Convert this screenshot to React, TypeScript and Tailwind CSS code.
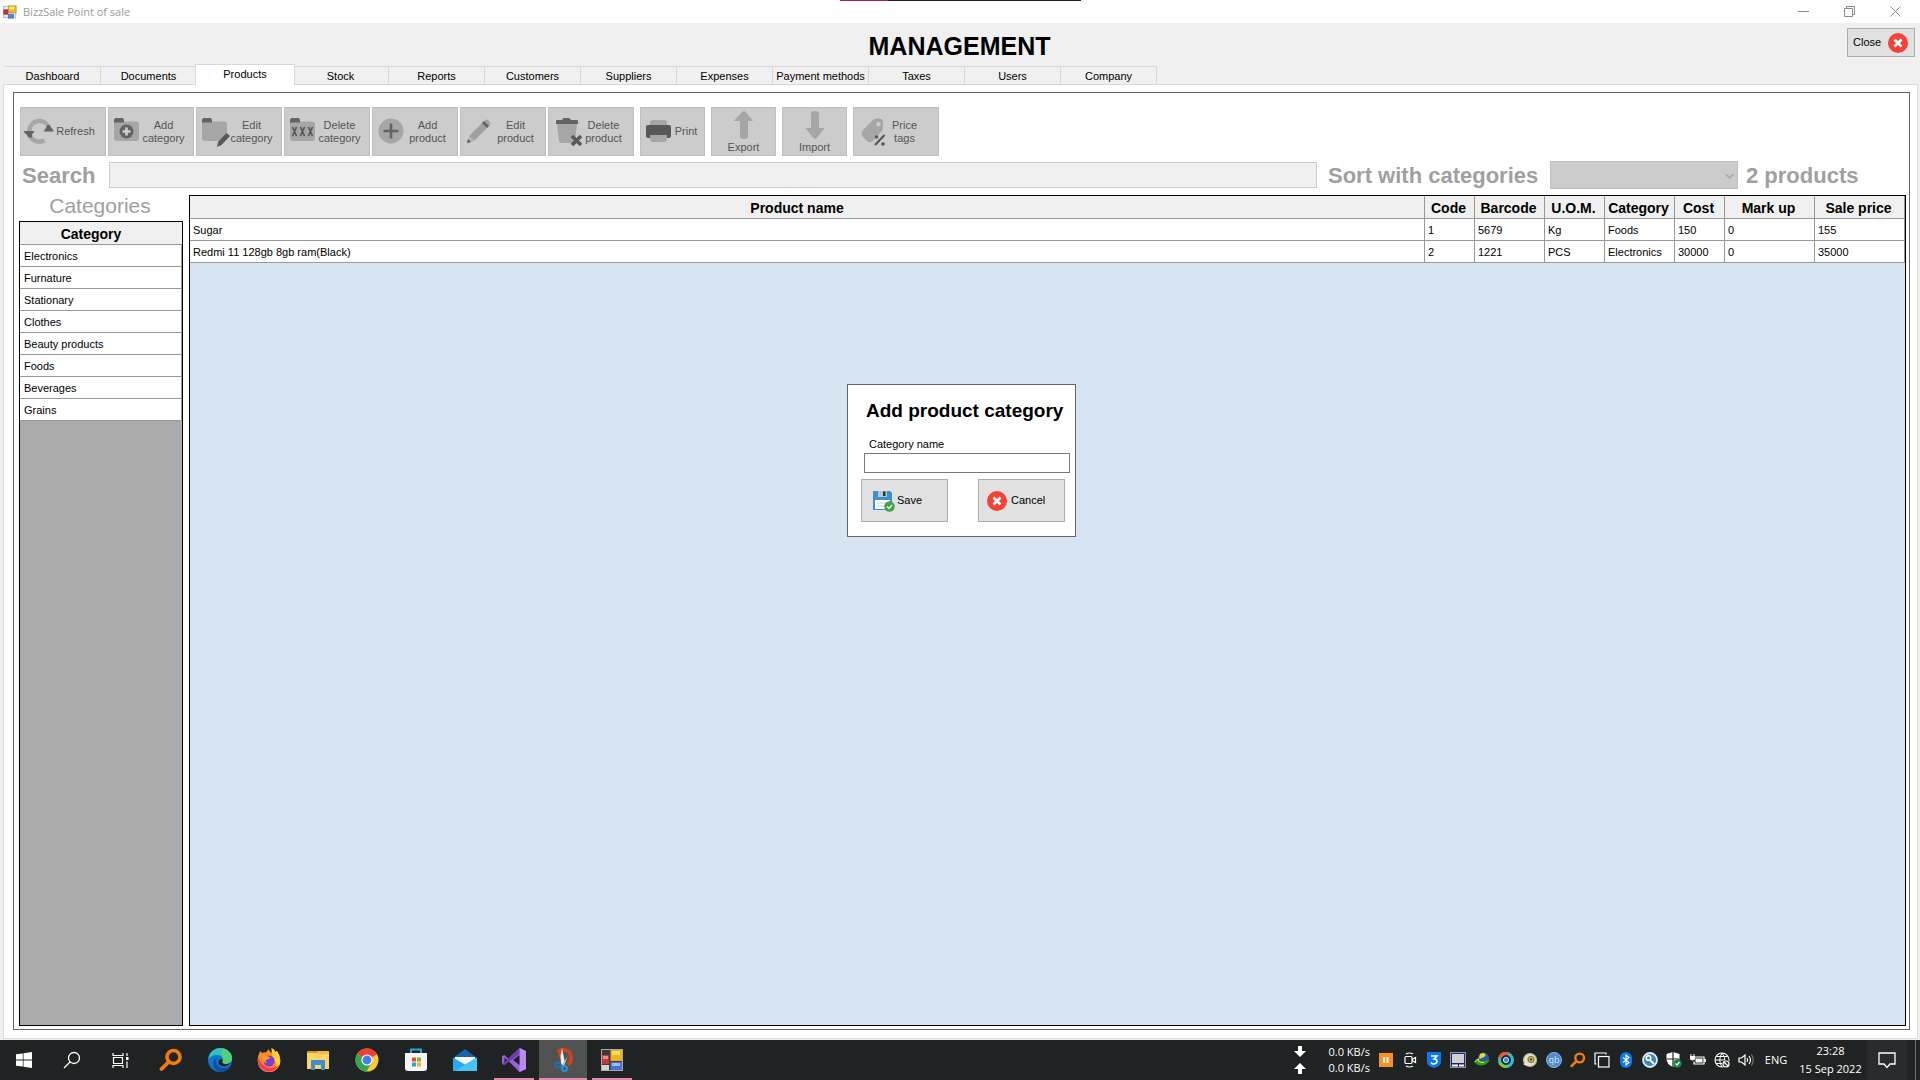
import { useState } from 'react'
import type { ReactNode } from 'react'

interface Product {
  name: string
  code: string
  barcode: string
  uom: string
  category: string
  cost: string
  markUp: string
  salePrice: string
}

const tabs = [
  'Dashboard',
  'Documents',
  'Products',
  'Stock',
  'Reports',
  'Customers',
  'Suppliers',
  'Expenses',
  'Payment methods',
  'Taxes',
  'Users',
  'Company',
]

const categories = [
  'Electronics',
  'Furnature',
  'Stationary',
  'Clothes',
  'Beauty products',
  'Foods',
  'Beverages',
  'Grains',
]

const products: Product[] = [
  { name: 'Sugar', code: '1', barcode: '5679', uom: 'Kg', category: 'Foods', cost: '150', markUp: '0', salePrice: '155' },
  {
    name: 'Redmi 11 128gb 8gb ram(Black)',
    code: '2',
    barcode: '1221',
    uom: 'PCS',
    category: 'Electronics',
    cost: '30000',
    markUp: '0',
    salePrice: '35000',
  },
]

const columns: { key: keyof Product; label: string; width: string }[] = [
  { key: 'name', label: 'Product name', width: 'pr-5' },
  { key: 'code', label: 'Code', width: 'w-[50px] pr-0.5' },
  { key: 'barcode', label: 'Barcode', width: 'w-[70px] pr-0.5' },
  { key: 'uom', label: 'U.O.M.', width: 'w-[60px] pr-0.5' },
  { key: 'category', label: 'Category', width: 'w-[70px] pr-0.5' },
  { key: 'cost', label: 'Cost', width: 'w-[50px] pr-0.5' },
  { key: 'markUp', label: 'Mark up', width: 'w-[90px] pr-0.5' },
  { key: 'salePrice', label: 'Sale price', width: 'w-[90px] pr-0.5' },
]

/* ---------- Icons ---------- */

const AppIcon = ({ className }: { className: string }) => (
  <svg viewBox="0 0 16 16" className={className}>
    <rect x="0.5" y="1.5" width="14" height="13" fill="#e8eef4" stroke="#a9b4bd" />
    <rect x="6" y="1" width="9" height="8" fill="#f0b820" stroke="#a88a2c" strokeWidth="0.7" />
    <rect x="7" y="2" width="6" height="3" fill="#ffe27a" />
    <rect x="1" y="5.5" width="4.5" height="5" fill="#d03030" stroke="#8c1d1d" strokeWidth="0.7" />
    <rect x="6" y="10.5" width="6" height="4.5" fill="#4b8be6" stroke="#2f5fae" strokeWidth="0.7" />
  </svg>
)

const CancelIcon = ({ className }: { className: string }) => (
  <svg viewBox="0 0 20 20" className={className}>
    <circle cx="10" cy="10" r="10" fill="#f44336" />
    <path d="M6.500 6.500l7 7M13.500 6.500l-7 7" stroke="#fff" strokeWidth="2.6" />
  </svg>
)

const SaveIcon = () => (
  <svg viewBox="0 0 22 22" className="h-[22px] w-[22px]">
    <path d="M0 1h17l2 2v17H0z" fill="#3c8fd0" />
    <rect x="5" y="1" width="9" height="6" fill="#b8c4cc" />
    <rect x="10" y="1.5" width="2.5" height="4.5" fill="#263238" />
    <rect x="2" y="10" width="15" height="9" fill="#fff" />
    <path d="M4 13h11M4 16h9" stroke="#c3ccd2" strokeWidth="1" />
    <circle cx="16.5" cy="16.5" r="5.2" fill="#43a047" />
    <path d="M14 16.5l2 2 3.2-3.6" stroke="#e6f5e7" strokeWidth="1.5" fill="none" />
  </svg>
)

const FolderShape = () => (
  <>
    <path d="M2 6.500V4q0-3 3-3h4q3 0 3 3v2.500z" fill="#646464" />
    <rect x="2" y="4.500" width="25" height="19.500" rx="3" fill="#a6a6a6" />
    <path d="M2 5.500V4q0-3 3-3h4q3 0 3 3v1.500z" fill="#646464" />
  </>
)

const ToolIcon = ({ children }: { children: ReactNode }) => (
  <svg viewBox="0 0 30 30" className="h-[30px] w-[30px] shrink-0">
    {children}
  </svg>
)

const RefreshIcon = () => (
  <ToolIcon>
    <path d="M5.300 14A10.200 10.200 0 0 1 24.500 9.500" stroke="#a6a6a6" strokeWidth="4.600" fill="none" />
    <path d="M5.500 17A10.200 10.200 0 0 0 20.500 23.300" stroke="#a6a6a6" strokeWidth="4.600" fill="none" />
    <path d="M0 14h10q.5 1-2 3.500v3H4.500l-2-3Q-.5 15 0 14z" fill="#646464" />
    <path d="M20 14.500h9.500q.5-1-2-3.500l-2-3h-2l-1.500 3q-2.500 2.500-2 3.500z" fill="#646464" />
  </ToolIcon>
)

const AddCategoryIcon = () => (
  <ToolIcon>
    <FolderShape />
    <circle cx="14.500" cy="14.500" r="7" fill="#646464" />
    <path d="M14.500 10.500v8M10.500 14.500h8" stroke="#cfcfcf" strokeWidth="2.600" />
  </ToolIcon>
)

const EditCategoryIcon = () => (
  <ToolIcon>
    <FolderShape />
    <path d="M17 30l1-5 8.500-9 3.500 3-8.500 9z" fill="#585858" />
  </ToolIcon>
)

const DeleteCategoryIcon = () => (
  <ToolIcon>
    <FolderShape />
    <path
      d="M4.500 10l4 9M8.500 10l-4 9M12.500 10l4 9M16.500 10l-4 9M20.500 10l4 9M24.500 10l-4 9"
      stroke="#585858"
      strokeWidth="1.700"
    />
  </ToolIcon>
)

const AddProductIcon = () => (
  <ToolIcon>
    <circle cx="15" cy="14" r="12.500" fill="#a6a6a6" />
    <path d="M15 6.500v15M7.500 14h15" stroke="#646464" strokeWidth="2.600" />
  </ToolIcon>
)

const EditProductIcon = () => (
  <ToolIcon>
    <path d="M5 19L19 5l5 5L10 24z" fill="#a0a0a0" />
    <path d="M19 5l2-2q1.500-1 3 0l2 2q1 1.500 0 3l-2 2z" fill="#a6a6a6" />
    <path d="M18 6l2-2 5 5-2 2z" fill="#646464" />
    <path d="M5 19l5 5-6 2z" fill="#b4b4b4" />
    <path d="M4 22l3 3-4 1z" fill="#585858" />
  </ToolIcon>
)

const DeleteProductIcon = () => (
  <ToolIcon>
    <path d="M5 7h20l-2 17q0 2-2 2H9q-2 0-2-2z" fill="#a6a6a6" />
    <path d="M4 4q0-1 1-1h5q1-2 2-2h5q1 0 2 2h6q1 0 1 1v3H4z" fill="#646464" />
    <path d="M20 19l9 9M29 19l-9 9" stroke="#585858" strokeWidth="3.600" />
  </ToolIcon>
)

const PrintIcon = () => (
  <ToolIcon>
    <path d="M6 9V6q0-3 3-3h11q3 0 3 3v3z" fill="#a6a6a6" />
    <rect x="2" y="8" width="25" height="13" rx="2" fill="#585858" />
    <path d="M6 18h17v3q0 4-3 4H9q-3 0-3-4z" fill="#a6a6a6" />
  </ToolIcon>
)

const ExportIcon = () => (
  <svg viewBox="0 0 22 28" className="h-7 w-[22px]">
    <path d="M11 0q1.500 0 9 10H15v15q0 3-4 3t-4-3V10H1Q9.500 0 11 0z" fill="#a6a6a6" />
  </svg>
)

const ImportIcon = () => (
  <svg viewBox="0 0 22 28" className="h-7 w-[22px]">
    <path d="M11 28q1.500 0 9.500-11H15V3q0-3-4-3T7 3v14H1.500Q9.500 28 11 28z" fill="#a6a6a6" />
  </svg>
)

const PriceTagIcon = () => (
  <ToolIcon>
    <path
      d="M7 12L16 3q1.500-1.500 4-1.500h2q4 0 4 4v5q0 2-1.500 4L16 24q-3 2.500-6 0l-4-4q-3-4 1-8zM21.500 5a2.300 2.300 0 1 0 .1 0z"
      fill="#a6a6a6"
      fillRule="evenodd"
    />
    <path d="M17 28L28 17" stroke="#cccccc" strokeWidth="5" />
    <path d="M18 28L27.500 18" stroke="#585858" strokeWidth="2.200" />
    <circle cx="19.500" cy="20" r="1.800" fill="#585858" />
    <circle cx="26" cy="27" r="1.800" fill="#585858" />
  </ToolIcon>
)

/* ---------- Taskbar icons ---------- */

const WindowsIcon = () => (
  <svg viewBox="0 0 16 16" className="h-4 w-4" fill="#fff">
    <path d="M0 2.300l6.800-.9v6.200H0zM7.500 1.200L16 0v7.600H7.500zM0 8.400h6.800v6.200L0 13.700zM7.500 8.400H16V16l-8.500-1.200z" />
  </svg>
)

const SearchIcon = () => (
  <svg viewBox="0 0 18 18" className="h-[18px] w-[18px]" fill="none" stroke="#fff" strokeWidth="1.300">
    <circle cx="11" cy="7" r="5.500" />
    <path d="M7 11l-6 6" />
  </svg>
)

const TaskViewIcon = () => (
  <svg viewBox="0 0 17 17" className="h-[17px] w-[17px]" fill="none" stroke="#fff" strokeWidth="1.200">
    <path d="M1 1v2.500h10V1M1 16v-2.500h10V16M1.500 5.500h9v6h-9zM15 1v3M15 9.500V16" />
    <rect x="14" y="5" width="2.500" height="3" fill="#fff" stroke="none" />
  </svg>
)

const OrangeSearchIcon = ({ className }: { className: string }) => (
  <svg viewBox="0 0 24 24" className={className} fill="none" stroke="#f57c0a" strokeLinecap="round">
    <circle cx="14.500" cy="9" r="6.500" strokeWidth="3.600" />
    <path d="M9 14.500l-6.500 6.500" strokeWidth="3.800" />
  </svg>
)

const EdgeIcon = () => (
  <svg viewBox="0 0 24 24" className="h-6 w-6">
    <circle cx="12" cy="12" r="12" fill="#1273c8" />
    <path d="M1 8C3 2.500 8 0 12 0c7 0 12 5 12 10 0 4-3 6-6 6-3 0-4.500-1.200-3.500-2.500 2-3-.5-6.500-5-6.500C5 7 2 9 .5 11z" fill="#35c1b8" />
    <path d="M14 0.300c6 1 10 5 10 9.700 0 4-3 6-6 6-3 0-4.500-1.200-3.500-2.500 1-1.600.8-3.500-.8-5z" fill="#52d07c" />
    <path d="M8 13c0 6 6 9 14 5.500C20 22 16 24 12 24c-5-1-8-6-6-11 1-2 2.500-3 4.500-3C9 10.500 8 11.500 8 13z" fill="#0c4f9f" />
    <path d="M14.500 13.500c-1 1.300.5 2.500 3.500 2.500 1.700 0 3.300-.6 4.500-1.800-1 3-4 4.300-7 4.100-4-.3-6-3.300-4.500-6 .9-1.300 2.500-1.300 3.200-.8.500.5.600 1.300.3 2z" fill="#202323" />
  </svg>
)

const FirefoxIcon = () => (
  <svg viewBox="0 0 24 24" className="h-6 w-6">
    <path d="M2 6q.5-2 1.500-3 .6 1.600 1.800 2Q7 4 9 4.500q2-3 3-3.500 0 2.500 2.500 4Q15 2 14.500 0q3 1.500 4 4l1.500-1q3.500 5 3.300 10A11.300 11.300 0 0 1 .7 13Q.5 9 2 6z" fill="#ff8a1e" />
    <path d="M14.500 0q3 1.500 4 4l1.500-1q3.500 5 3.300 10-.2 5-4.300 8 1-8-3.500-12Q15 5 14.500 0z" fill="#ffd034" />
    <path d="M1 9q-1 7 3.500 11.300Q9 24.500 15 23q5-1.500 7-6-6 5-12 2.500Q3.500 17 1 9z" fill="#f7356b" />
    <circle cx="12" cy="13" r="5.500" fill="#7a3fd0" />
    <path d="M5 8q3-1.500 6 .5l2 1q-1 2-3.500 2-2 1.500.5 3.500Q5 15 5 8z" fill="#ff9a2a" />
  </svg>
)

const ExplorerIcon = () => (
  <svg viewBox="0 0 24 22" className="h-[22px] w-6">
    <path d="M1 2h9l2 3H1z" fill="#e0961e" />
    <rect x="1" y="4" width="22" height="16" fill="#ffd466" />
    <path d="M10 2h13v3H12z" fill="#f4b93c" />
    <path d="M5 21v-9q0-1 1-1h12q1 0 1 1v9h-4v-5H9v5z" fill="#3e8ecb" />
  </svg>
)

const ChromeIcon = () => (
  <svg viewBox="0 0 24 24" className="h-6 w-6">
    <circle cx="12" cy="12" r="11.500" fill="#fcc934" />
    <path d="M12 12L2 6.200A11.500 11.500 0 0 1 22 6.200z" fill="#ea4335" />
    <path d="M12 6.500h10.200q-4-6-10.200-6z" fill="#ea4335" />
    <path d="M2 6.200A11.500 11.500 0 0 0 11.500 23.500l5-8.700L12 12z" fill="#2fa853" />
    <circle cx="12" cy="12" r="5.600" fill="#fff" />
    <circle cx="12" cy="12" r="4.400" fill="#3d7fee" />
  </svg>
)

const StoreIcon = () => (
  <svg viewBox="0 0 24 24" className="h-6 w-6">
    <path d="M7 6V1.500h10V6" stroke="#2aa4d8" strokeWidth="2" fill="none" />
    <path d="M1 5h22v15q0 3-3 3H4q-3 0-3-3z" fill="#f5f5f5" />
    <path d="M8 9.500h4v4H8z" fill="#e8502a" />
    <path d="M13 9.500h4v4h-4z" fill="#7cb82f" />
    <path d="M8 14.500h4v4H8z" fill="#2a9fe0" />
    <path d="M13 14.500h4v4h-4z" fill="#f7b51c" />
  </svg>
)

const MailIcon = () => (
  <svg viewBox="0 0 24 24" className="h-6 w-6">
    <path d="M0 10L12 1l12 9v4H0z" fill="#1463ab" />
    <path d="M2 9h20v8H2z" fill="#f4f8fb" />
    <path d="M0 9.500l12 7 12-7V23H0z" fill="#28a8ea" />
    <path d="M24 9.500V23H2z" fill="#47c4f5" />
  </svg>
)

const VisualStudioIcon = () => (
  <svg viewBox="0 0 24 24" className="h-6 w-6">
    <path d="M17.500 0L24 3v18l-6.500 3L6.500 13 2.500 17 0 16V8l2.500-1L6.500 11z" fill="#9b5fdc" />
    <path d="M17.500 0L24 3v18l-6.500 3z" fill="#b98af0" />
    <path d="M17.500 0v6L2.500 17 0 16z" fill="#6d3fae" />
    <path d="M17.500 7v10L11 12zM2.500 9.500v5L5 12z" fill="#202323" />
  </svg>
)

const SnipIcon = () => (
  <svg viewBox="0 0 24 24" className="h-6 w-6">
    <path d="M6.500 4Q10 1 14 2q6 1.500 6 8 0 4-3 7" stroke="#c9431f" strokeWidth="4" fill="none" />
    <path d="M6 2h6v9H9z" fill="#c9431f" />
    <path d="M11 0l3 15-2 3-2-2-.5-8z" fill="#eceff1" />
    <path d="M17 8l-4 10-2-1z" fill="#b9c0c4" />
    <circle cx="7" cy="17" r="2.600" stroke="#1d6fb8" strokeWidth="2" fill="none" />
    <circle cx="13.500" cy="20.500" r="2.500" stroke="#2a93dc" strokeWidth="2" fill="none" />
  </svg>
)

const FormsIcon = () => (
  <svg viewBox="0 0 22 22" className="h-[22px] w-[22px]">
    <rect x="0.500" y="0.500" width="21" height="21" fill="#3a3a3a" stroke="#a8a8a8" />
    <rect x="9.500" y="1" width="11.500" height="11" fill="#e8b420" />
    <rect x="11" y="2" width="8" height="4" fill="#f8da60" />
    <rect x="1" y="6" width="7" height="9" fill="#c93636" />
    <rect x="2" y="7" width="5" height="3" fill="#ee8f8f" />
    <rect x="1" y="16" width="7" height="5" fill="#d5d5d5" />
    <rect x="9.500" y="13" width="11.500" height="8" fill="#4a72cf" />
    <rect x="11" y="14" width="8" height="3" fill="#9db8f2" />
  </svg>
)

const TrayIcon = ({ children }: { children: ReactNode }) => (
  <svg viewBox="0 0 16 16" className="h-4 w-4" fill="none" stroke="#fff" strokeWidth="1.200">
    {children}
  </svg>
)

const trayIcons: { label: string; icon: ReactNode }[] = [
  {
    label: 'Pause',
    icon: (
      <TrayIcon>
        <rect x="1" y="1" width="14" height="14" fill="#f7931e" stroke="none" />
        <path d="M6 5v6M9.500 5v6" strokeWidth="2" />
      </TrayIcon>
    ),
  },
  {
    label: 'Meet now',
    icon: (
      <TrayIcon>
        <rect x="3" y="4.500" width="7" height="7" rx="1" />
        <path d="M10 7.500l3.500-2v5l-3.500-2M4 2q3.500-2 7 0M4 14q3.500 2 7 0" />
      </TrayIcon>
    ),
  },
  {
    label: 'Shield',
    icon: (
      <TrayIcon>
        <path d="M1 0h14v10q0 4-7 6-7-2-7-6z" fill="#0a78f0" stroke="none" />
        <path d="M5 4h6L8 7q3 0 3 2.300T8 12q-2 0-3-1.500" strokeWidth="1.500" />
      </TrayIcon>
    ),
  },
  {
    label: 'Touchpad',
    icon: (
      <TrayIcon>
        <rect x="0.500" y="0.500" width="15" height="15" fill="#1d2250" stroke="#8b90c8" />
        <rect x="2" y="2" width="12" height="9" fill="#cfcfcf" stroke="none" />
        <path d="M2 13.500h6M9 13.500h5" strokeWidth="2" />
      </TrayIcon>
    ),
  },
  {
    label: 'Download manager',
    icon: (
      <TrayIcon>
        <circle cx="9.500" cy="6" r="5.500" fill="#2458a8" stroke="none" />
        <path d="M6 2q3-2 5 0t-3 4-3 0z" fill="#f0d040" stroke="none" />
        <path d="M0 10q2-4 6-4l-1 2q5 2 11-.5Q12 15 4 13z" fill="#2f9a22" stroke="none" />
        <path d="M1 10q2-3 4-3l-1 2q3 2 6 1.500" stroke="#d8e070" strokeWidth="1" />
      </TrayIcon>
    ),
  },
  {
    label: 'Eye',
    icon: (
      <TrayIcon>
        <circle cx="8" cy="8" r="6.500" fill="#123040" stroke="#36b8d8" strokeWidth="3" />
        <path d="M1.500 6Q4 0 11 1.500" stroke="#e85a2a" strokeWidth="3" />
        <path d="M1.500 10q2 5 8 4.500" stroke="#7dc63a" strokeWidth="3" />
        <circle cx="8" cy="8" r="2.600" fill="#2d8fd0" stroke="#fff" strokeWidth="0.800" />
      </TrayIcon>
    ),
  },
  {
    label: 'Disc',
    icon: (
      <TrayIcon>
        <circle cx="8" cy="8" r="6.500" fill="#e6e2cc" stroke="#b9b493" />
        <circle cx="9" cy="7.500" r="3" fill="#c9b560" stroke="#8c7a30" />
        <circle cx="9" cy="7.500" r="1" fill="#222" stroke="none" />
        <path d="M1 12l3-1 1 3z" fill="#f7f7f7" stroke="none" />
      </TrayIcon>
    ),
  },
  {
    label: 'qb',
    icon: (
      <TrayIcon>
        <circle cx="8" cy="8" r="7.500" fill="#4f8bd0" stroke="#86b2e4" strokeWidth="1" />
        <text x="8" y="11" textAnchor="middle" fontSize="9" fill="#d7e7f8" stroke="none" fontFamily="Open Sans, sans-serif">
          qb
        </text>
      </TrayIcon>
    ),
  },
  { label: 'Everything', icon: <OrangeSearchIcon className="h-4 w-4" /> },
  {
    label: 'Windows',
    icon: (
      <TrayIcon>
        <rect x="4.500" y="4.500" width="10.500" height="10.500" />
        <path d="M2.500 12H1V1h11v1.500" />
      </TrayIcon>
    ),
  },
  {
    label: 'Bluetooth',
    icon: (
      <TrayIcon>
        <rect x="2" y="0" width="12" height="16" rx="6" fill="#0a78f0" stroke="none" />
        <path d="M5 5.500l6 5L8 13V3l3 2.500-6 5" strokeWidth="1.100" />
      </TrayIcon>
    ),
  },
  {
    label: 'Key',
    icon: (
      <TrayIcon>
        <circle cx="8" cy="8" r="7" fill="#3d86b5" stroke="#dcebf4" strokeWidth="1.800" />
        <circle cx="6.500" cy="6" r="2.300" strokeWidth="1.500" />
        <path d="M8 8l4 4" strokeWidth="1.800" />
      </TrayIcon>
    ),
  },
  {
    label: 'Security',
    icon: (
      <TrayIcon>
        <path d="M7 0l6.500 2v5q0 5-6.500 8Q.5 12 .5 7V2z" fill="#fff" stroke="none" />
        <path d="M7 0v15M.5 7h13" stroke="#202323" />
        <circle cx="11.500" cy="11.500" r="4.200" fill="#14893c" stroke="none" />
        <path d="M9.500 11.500l1.500 1.500 2.500-3" />
      </TrayIcon>
    ),
  },
  {
    label: 'Battery',
    icon: (
      <TrayIcon>
        <path d="M5.500 5H14v7H4V9.500M15.300 7v3" />
        <rect x="5.500" y="6.500" width="7" height="4" fill="#fff" stroke="none" />
        <path d="M1 2v2M4 2v2M0 4.500h5v1Q5 8 2.500 8T0 5.500z" fill="#fff" strokeWidth="1" />
      </TrayIcon>
    ),
  },
  {
    label: 'Network',
    icon: (
      <TrayIcon>
        <circle cx="8" cy="8" r="7" strokeWidth="1.100" />
        <path d="M8 1Q3.500 8 8 15M8 1q4 5 2.500 8M1 8h10M2.500 4.500h11M2.500 11.500H8" strokeWidth="1" />
        <circle cx="12" cy="12" r="4" fill="#202323" stroke="none" />
        <circle cx="12" cy="12" r="3" />
        <path d="M10 10l4 4" />
      </TrayIcon>
    ),
  },
  {
    label: 'Volume',
    icon: (
      <TrayIcon>
        <path d="M1 6h2.500L7 3v10L3.500 10H1zM9 6q1.500 2 0 4M11 4q3 4 0 8" />
        <path d="M13.500 2.500q3.500 5.500 0 11" stroke="#777" />
      </TrayIcon>
    ),
  },
]

const pinnedApps: { label: string; icon: ReactNode; state?: 'open' | 'active' }[] = [
  { label: 'Everything', icon: <OrangeSearchIcon className="h-6 w-6" /> },
  { label: 'Edge', icon: <EdgeIcon /> },
  { label: 'Firefox', icon: <FirefoxIcon /> },
  { label: 'File Explorer', icon: <ExplorerIcon /> },
  { label: 'Chrome', icon: <ChromeIcon /> },
  { label: 'Store', icon: <StoreIcon /> },
  { label: 'Mail', icon: <MailIcon /> },
  { label: 'Visual Studio', icon: <VisualStudioIcon />, state: 'open' },
  { label: 'Snip', icon: <SnipIcon />, state: 'active' },
  { label: 'BizzSale', icon: <FormsIcon />, state: 'open' },
]

/* ---------- Parts ---------- */

function TitleBar() {
  return (
    <div className="flex h-[23px] shrink-0 items-center bg-white pl-[3px] pr-[2px]">
      <AppIcon className="h-[14px] w-[14px]" />
      <span className="ml-1.5 flex-1 font-['Open_Sans',sans-serif] text-[11px] leading-4 text-[#999999]">
        BizzSale Point of sale
      </span>
      <button aria-label="Minimize" className="flex h-5 w-[46px] items-center justify-center">
        <svg viewBox="0 0 11 11" className="h-[11px] w-[11px]" stroke="#8c8c8c" fill="none">
          <path d="M0 5.500h11" />
        </svg>
      </button>
      <button aria-label="Restore" className="flex h-5 w-[46px] items-center justify-center">
        <svg viewBox="0 0 11 11" className="h-[11px] w-[11px]" stroke="#8c8c8c" fill="none">
          <path d="M.5 2.500h8v8h-8zM2.500 2.500v-2h8v8h-2" />
        </svg>
      </button>
      <button aria-label="Close window" className="flex h-5 w-[46px] items-center justify-center">
        <svg viewBox="0 0 11 11" className="h-[11px] w-[11px]" stroke="#8c8c8c" fill="none">
          <path d="M.5.5l10 10M10.500.5l-10 10" />
        </svg>
      </button>
    </div>
  )
}

function ToolButton({ icon, children }: { icon: ReactNode; children: ReactNode }) {
  return (
    <button
      disabled
      className="flex h-[49px] w-[86px] items-center border border-[#bfbfbf] bg-[#cccccc] pl-[3px] leading-[13px] text-[#555555]"
    >
      {icon}
      <span className="w-[43px] text-center">{children}</span>
    </button>
  )
}

function Toolbar() {
  return (
    <div className="flex gap-1.5 pl-1.5">
      <div className="flex gap-0.5">
        <ToolButton icon={<RefreshIcon />}>Refresh</ToolButton>
        <ToolButton icon={<AddCategoryIcon />}>Add category</ToolButton>
        <ToolButton icon={<EditCategoryIcon />}>Edit category</ToolButton>
        <ToolButton icon={<DeleteCategoryIcon />}>Delete category</ToolButton>
        <ToolButton icon={<AddProductIcon />}>Add product</ToolButton>
        <ToolButton icon={<EditProductIcon />}>Edit product</ToolButton>
        <ToolButton icon={<DeleteProductIcon />}>Delete product</ToolButton>
      </div>
      <button
        disabled
        className="flex h-[49px] w-[65px] items-center border border-[#bfbfbf] bg-[#cccccc] pl-[3px] text-[#555555]"
      >
        <PrintIcon />
        <span className="w-6 text-center">Print</span>
      </button>
      <button
        disabled
        className="flex h-[49px] w-[65px] flex-col items-center justify-between border border-[#bfbfbf] bg-[#cccccc] pt-[3px] pb-px leading-[13px] text-[#555555]"
      >
        <ExportIcon />
        Export
      </button>
      <button
        disabled
        className="flex h-[49px] w-[65px] flex-col items-center justify-between border border-[#bfbfbf] bg-[#cccccc] pt-[3px] pb-px leading-[13px] text-[#555555]"
      >
        <ImportIcon />
        Import
      </button>
      <ToolButton icon={<PriceTagIcon />}>
        <span className="block pr-2">
          Price
          <br />
          tags
        </span>
      </ToolButton>
    </div>
  )
}

function CategoryPanel() {
  return (
    <div className="flex w-[164px] shrink-0 flex-col">
      <h2 className="h-[26px] pr-0.5 text-center text-[21px] leading-[22px] text-[#a0a0a0]">Categories</h2>
      <div className="flex-1 border border-black bg-[#ababab]">
        <table className="w-full border-separate border-spacing-0">
          <thead>
            <tr>
              <th className="h-[23px] border-b border-[#999999] bg-[#f0f0f0] p-0 pt-0.5 pr-5 text-sm leading-4 font-bold">
                Category
              </th>
            </tr>
          </thead>
          <tbody>
            {categories.map((category) => (
              <tr key={category}>
                <td className="h-[22px] border-r border-b border-[#999999] bg-white py-0 pr-0 pl-1 leading-4">
                  {category}
                </td>
              </tr>
            ))}
          </tbody>
        </table>
      </div>
    </div>
  )
}

function ProductGrid() {
  return (
    <div className="flex-1 border border-black bg-[#d7e4f1]">
      <table className="w-full table-fixed border-separate border-spacing-0">
        <thead>
          <tr>
            {columns.map((col) => (
              <th
                key={col.key}
                className={`h-[23px] border-r border-b border-[#999999] bg-[#f0f0f0] pt-0.5 pb-0 pl-0 text-center text-sm leading-4 font-bold whitespace-nowrap ${col.width}`}
              >
                {col.label}
              </th>
            ))}
          </tr>
        </thead>
        <tbody>
          {products.map((product) => (
            <tr key={product.code}>
              {columns.map((col) => (
                <td
                  key={col.key}
                  className="h-[22px] border-r border-b border-[#999999] bg-white py-0 pr-0 pl-[3px] leading-4 whitespace-nowrap"
                >
                  {product[col.key]}
                </td>
              ))}
            </tr>
          ))}
        </tbody>
      </table>
    </div>
  )
}

function AddCategoryDialog() {
  const [name, setName] = useState('')

  return (
    <div
      role="dialog"
      aria-label="Add product category"
      className="absolute top-[384px] left-1/2 -ml-[113px] w-[229px] border border-[#646464] bg-white pb-[14px]"
    >
      <h2 className="pt-[14px] pl-[18px] text-[19px] leading-6 font-bold whitespace-nowrap">Add product category</h2>
      <label htmlFor="category-name" className="mt-[13px] block pl-[21px] leading-4">
        Category name
      </label>
      <input
        id="category-name"
        value={name}
        onChange={(e) => setName(e.target.value)}
        className="mt-px mr-[5px] ml-4 block h-5 w-[206px] border border-[#7a7a7a] bg-white px-1 outline-none"
      />
      <div className="mt-1.5 flex justify-between pr-2.5 pl-[13px]">
        <button className="flex h-[43px] w-[87px] items-center gap-0.5 border border-[#adadad] bg-[#e1e1e1] pl-[11px]">
          <SaveIcon />
          Save
        </button>
        <button className="flex h-[43px] w-[87px] items-center gap-1 border border-[#adadad] bg-[#e1e1e1] pl-2">
          <CancelIcon className="h-5 w-5" />
          Cancel
        </button>
      </div>
    </div>
  )
}

function Taskbar() {
  return (
    <div className="flex h-10 shrink-0 bg-[#202323] font-['Open_Sans',sans-serif] text-[11px] text-white">
      <button aria-label="Start" className="flex w-12 items-center justify-center">
        <WindowsIcon />
      </button>
      <button aria-label="Search" className="flex w-12 items-center justify-center">
        <SearchIcon />
      </button>
      <button aria-label="Task view" className="flex w-12 items-center justify-center">
        <TaskViewIcon />
      </button>
      <div className="ml-[3px] flex gap-px">
        {pinnedApps.map((app) => (
          <button
            key={app.label}
            aria-label={app.label}
            className={`relative flex w-12 items-center justify-center ${app.state === 'active' ? 'bg-[#505252]' : ''}`}
          >
            {app.icon}
            {app.state && (
              <span
                className={`absolute bottom-0 h-0.5 bg-[#e887b0] ${app.state === 'active' ? 'inset-x-0' : 'inset-x-1'}`}
              />
            )}
          </button>
        ))}
      </div>

      {/* System tray */}
      <div className="ml-auto flex items-center">
        <svg viewBox="0 0 12 28" className="mr-[23px] h-7 w-3" fill="#fff">
          <path d="M4 0h4v5h4l-6 6-6-6h4zM4 28h4v-5h4l-6-6-6 6h4z" />
        </svg>
        <div className="mr-1 text-right leading-4">
          <div>0.0 KB/s</div>
          <div>0.0 KB/s</div>
        </div>
        {trayIcons.map((item) => (
          <button key={item.label} aria-label={item.label} className="flex h-10 w-6 items-center justify-center">
            {item.icon}
          </button>
        ))}
        <button className="w-9 text-center">ENG</button>
        <div className="w-[73px] text-center leading-[18px] whitespace-nowrap">
          <div>23:28</div>
          <div>15 Sep 2022</div>
        </div>
        <button aria-label="Notifications" className="flex h-10 w-10 items-center justify-center bg-[#292c2c]">
          <svg viewBox="0 0 18 18" className="h-[18px] w-[18px]" fill="none" stroke="#fff" strokeWidth="1.300">
            <path d="M1 2h16v11h-5l-3 3.500L6 13H1z" />
          </svg>
        </button>
        <div className="ml-2 h-10 w-[5px] border-l border-[#6b6d6d]" />
      </div>
    </div>
  )
}

export default function App() {
  const [activeTab, setActiveTab] = useState('Products')

  return (
    <div className="relative flex h-screen flex-col overflow-hidden bg-[#f0f0f0] font-['Liberation_Sans',Arial,sans-serif] text-[11px] text-black">
      <div className="absolute top-0 left-1/2 -ml-[120px] flex h-px w-[241px] bg-[#1f1a20]">
        <span className="w-12 bg-[#b01c56]" />
      </div>
      <TitleBar />

      {/* Header */}
      <header className="grid h-[41px] shrink-0 grid-cols-[1fr_auto_1fr] items-start pr-[5px] pl-1">
        <span />
        <h1 className="pt-[7px] text-[25px] leading-8 font-bold">MANAGEMENT</h1>
        <button className="mt-[5px] flex h-[29px] w-[68px] items-center justify-between justify-self-end border border-[#adadad] bg-[#e1e1e1] pr-1.5 pl-[5px]">
          Close
          <CancelIcon className="h-5 w-5" />
        </button>
      </header>

      {/* Tabs */}
      <div role="tablist" className="relative -mb-px flex h-[21px] shrink-0 items-end pl-[5px]">
        {tabs.map((tab) => (
          <button
            key={tab}
            role="tab"
            aria-selected={tab === activeTab}
            onClick={() => setActiveTab(tab)}
            className={
              tab === activeTab
                ? 'relative -mx-0.5 h-[21px] w-[100px] border border-b-0 border-[#d9d9d9] bg-white pb-0.5 whitespace-nowrap'
                : 'h-[19px] w-24 border border-l-0 border-[#d9d9d9] bg-[#f0f0f0] pt-px whitespace-nowrap'
            }
          >
            {tab}
          </button>
        ))}
      </div>

      {/* Tab page */}
      <main className="mr-[2px] mb-px ml-[3px] flex min-h-0 flex-1 flex-col border border-[#dcdcdc] bg-white pt-[7px] pr-[7px] pb-2 pl-[9px]">
        <div className="flex flex-1 flex-col border border-[#646464] pt-[14px] pr-[3px] pb-[3px]">
          <Toolbar />

          <div className="mt-[5px] flex h-7 items-center text-[22px] font-bold text-[#a0a0a0]">
            <label htmlFor="search" className="w-[95px] pl-2">
              Search
            </label>
            <input id="search" disabled className="h-[26px] min-w-0 flex-1 border border-[#cccccc] bg-[#f0f0f0] px-1" />
            <label htmlFor="sort" className="w-[233px] pl-[11px] whitespace-nowrap">
              Sort with categories
            </label>
            <div className="relative w-[188px]">
              <select
                id="sort"
                disabled
                className="block h-7 w-full appearance-none border border-[#bfbfbf] bg-[#cccccc] px-1 opacity-100"
              />
              <svg
                viewBox="0 0 9 6"
                className="pointer-events-none absolute top-3 right-1 h-1.5 w-[9px]"
                fill="none"
                stroke="#a6a6a6"
                strokeWidth="1.300"
              >
                <path d="M.5 1l4 4 4-4" />
              </svg>
            </div>
            <span className="w-[168px] pl-2 whitespace-nowrap">2 products</span>
          </div>

          <div className="mt-1.5 flex flex-1 gap-1.5 pl-[5px]">
            <CategoryPanel />
            <ProductGrid />
          </div>
        </div>
      </main>

      <Taskbar />
      <AddCategoryDialog />
    </div>
  )
}
